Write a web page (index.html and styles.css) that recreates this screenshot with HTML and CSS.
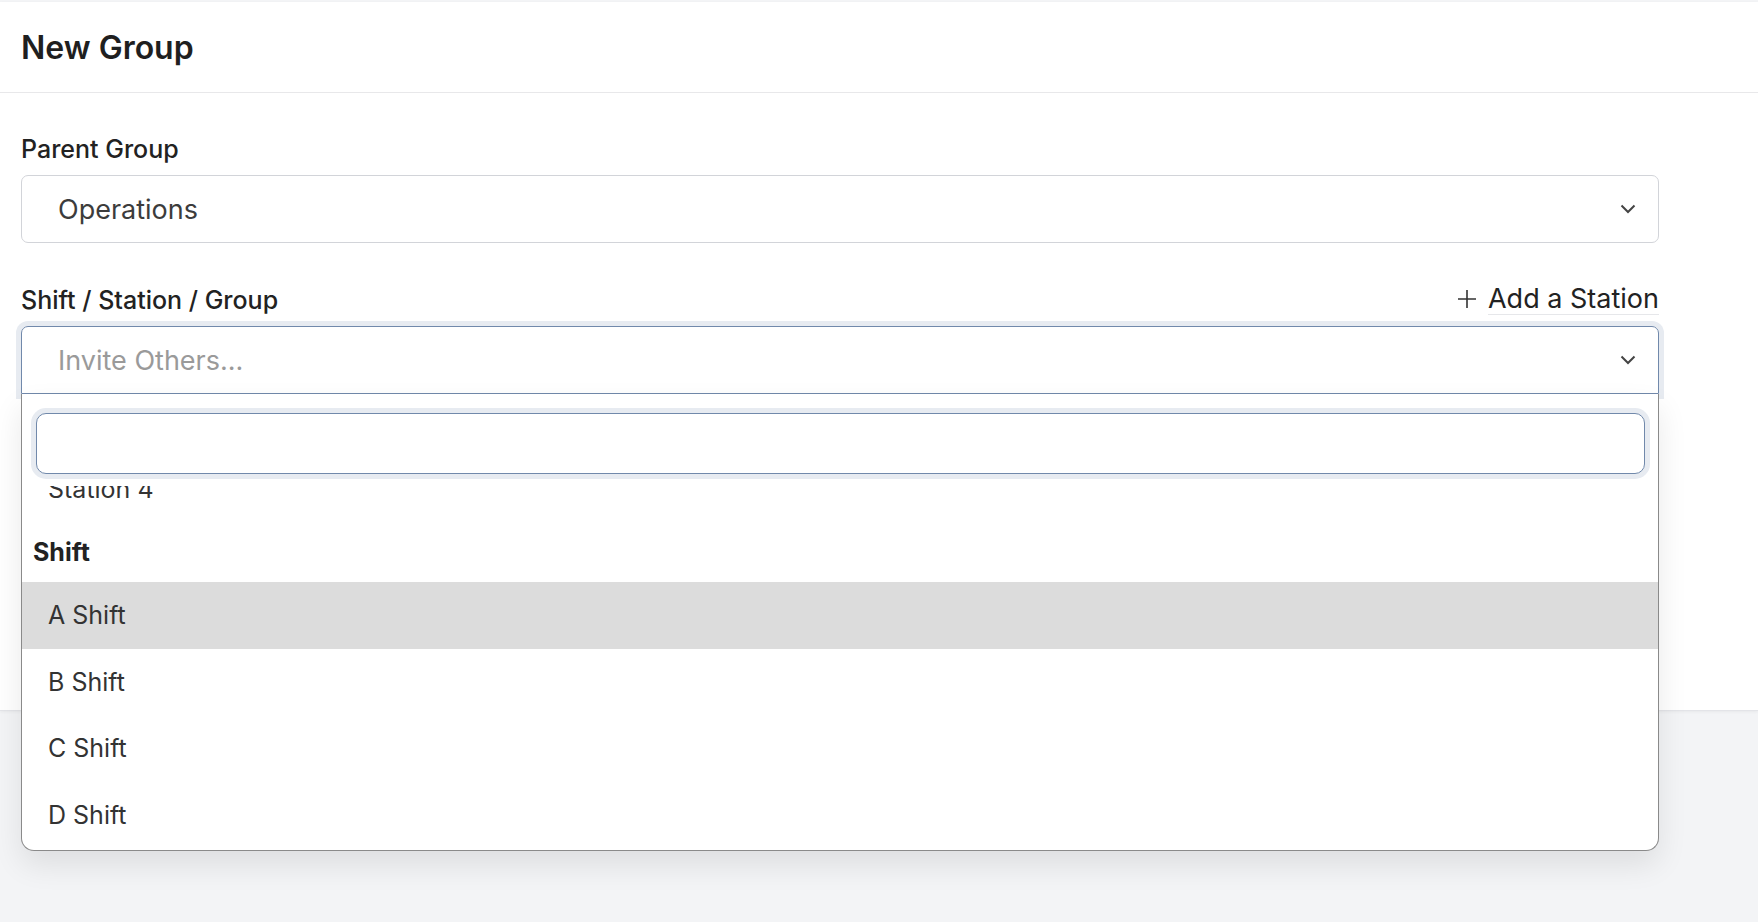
FILE: index.html
```html
<!DOCTYPE html>
<html lang="en">
<head>
    <meta charset="UTF-8">
    <meta name="viewport" content="width=device-width, initial-scale=1.0">
    <title>New Group</title>
    <link rel="stylesheet" href="styles.css">
</head>
<body>
    <div class="card">
        <div class="card-header">
            <h1>New Group</h1>
        </div>

        <div class="card-body">
            <div class="field">
                <label class="field-label">Parent Group</label>
                <div class="select">
                    <span class="select-value">Operations</span>
                    <svg class="chevron" width="16" height="10" viewBox="0 0 16 10">
                        <path d="M1.5 1.5 L8 8 L14.5 1.5" fill="none" stroke="#444" stroke-width="2"/>
                    </svg>
                </div>
            </div>

            <div class="field field-open">
                <div class="field-row">
                    <label class="field-label">Shift / Station / Group</label>
                    <a class="add-link" href="#">
                        <svg class="plus" width="20" height="20" viewBox="0 0 20 20">
                            <path d="M10 1 V19 M1 10 H19" fill="none" stroke="#333" stroke-width="1.6"/>
                        </svg>
                        <span>Add a Station</span>
                    </a>
                </div>
                <div class="select select-focus">
                    <span class="select-placeholder">Invite Others...</span>
                    <svg class="chevron" width="16" height="10" viewBox="0 0 16 10">
                        <path d="M1.5 1.5 L8 8 L14.5 1.5" fill="none" stroke="#444" stroke-width="2"/>
                    </svg>
                </div>

                <div class="dropdown">
                    <div class="dropdown-search">
                        <input type="text" class="search-input">
                    </div>
                    <ul class="option-list">
                        <li class="option">Station 4</li>
                        <li class="option-group">Shift</li>
                        <li class="option active">A Shift</li>
                        <li class="option">B Shift</li>
                        <li class="option">C Shift</li>
                        <li class="option">D Shift</li>
                    </ul>
                </div>
            </div>
        </div>
    </div>
</body>
</html>
```

FILE: styles.css
```css
html {
    height: 100%;
}
body {
    margin: 0;
    min-height: 100%;
    box-sizing: border-box;
    padding-top: 2px;
    font-family: Inter, "Noto Sans", sans-serif;
    background-color: #f3f4f6;
    color: #222;
}
.card {
    background: white;
    border-bottom: 1px solid #e3e4e8;
    box-shadow: 0 1px 3px rgba(0,0,0,0.05);
}
.card-header {
    height: 90px;
    display: flex;
    align-items: center;
    padding: 0 21px;
    border-bottom: 1px solid #e8e8ea;
}
.card-header h1 {
    margin: 0;
    font-size: 32px;
    font-weight: 600;
    color: #1f1f1f;
}
.card-body {
    padding: 38px 99px 316px 21px;
}
.field {
    position: relative;
}
.field + .field {
    margin-top: 39px;
}
.field-label {
    display: block;
    font-size: 25px;
    font-weight: 500;
    line-height: 36px;
    color: #222;
    margin-bottom: 8px;
}
.field-row {
    display: flex;
    justify-content: space-between;
    align-items: baseline;
    margin-bottom: 8px;
}
.field-row .field-label {
    margin-bottom: 0;
}
.add-link {
    display: flex;
    align-items: center;
    gap: 11px;
    font-size: 27px;
    color: #222;
    text-decoration: none;
}
.add-link span {
    border-bottom: 1px solid #e6e7ea;
    line-height: 30px;
}
.select {
    height: 66px;
    display: flex;
    align-items: center;
    justify-content: space-between;
    padding: 0 22px 0 36px;
    border: 1px solid #d2d4d9;
    border-radius: 7px;
    font-size: 27px;
}
.select-value {
    color: #3c3c3c;
}
.select-placeholder {
    color: #9a9a9a;
}
.select-focus {
    border-color: #7189ab;
    border-radius: 7px 7px 0 0;
    box-shadow: 0 0 0 5px #e7ebf1;
}
.dropdown {
    position: absolute;
    top: 100%;
    left: 0;
    right: 0;
    z-index: 10;
    background: white;
    border: 1px solid #8a8a8a;
    border-top: none;
    border-radius: 0 0 13px 13px;
    box-shadow: 0 14px 30px rgba(0,0,0,0.09);
    overflow: hidden;
}
.dropdown-search {
    position: relative;
    z-index: 1;
    background: white;
    padding: 19px 13px 12px 14px;
}
.search-input {
    display: block;
    box-sizing: border-box;
    width: 100%;
    height: 61px;
    border: 1px solid #7189ab;
    border-radius: 10px;
    box-shadow: 0 0 0 5px #e7ebf1;
    outline: none;
    font: inherit;
}
.option-list {
    list-style: none;
    margin: -30px 0 0;
    padding: 0 0 2px;
}
.option {
    height: 66.5px;
    line-height: 66.5px;
    padding-left: 26px;
    font-size: 25px;
    color: #333;
}
.option.active {
    background: #dcdcdc;
}
.option-group {
    height: 59.5px;
    line-height: 59.5px;
    padding-left: 11px;
    font-size: 25px;
    font-weight: 700;
    color: #222;
}
```
